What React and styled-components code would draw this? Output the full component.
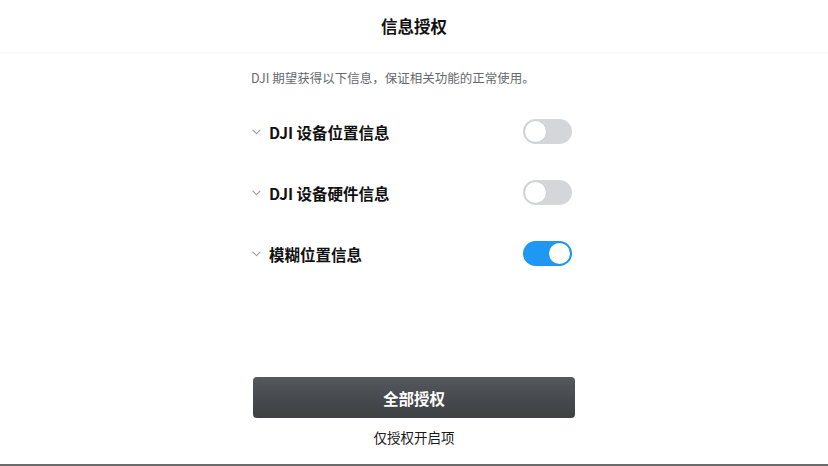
import styled, { createGlobalStyle } from 'styled-components';

const GlobalStyle = createGlobalStyle`
  html, body {
    margin: 0;
    padding: 0;
    background: #ffffff;
  }
  body {
    font-family: "Noto Sans CJK SC", "Liberation Sans", sans-serif;
    color: #1a1a1a;
  }
`;

const items = [
  { label: 'DJI 设备位置信息', on: false },
  { label: 'DJI 设备硬件信息', on: false },
  { label: '模糊位置信息', on: true },
];

const ChevronDown = () => (
  <svg width="9" height="6" viewBox="0 0 9 6" fill="none">
    <path d="M1 1.2 L4.5 4.6 L8 1.2" stroke="#9a9ca0" strokeWidth="1.1" strokeLinecap="round" strokeLinejoin="round" />
  </svg>
);

const App = () => {
  return (
    <>
      <GlobalStyle />
      <StPage>
        <StHeader>信息授权</StHeader>
        <StBody>
          <StIntro>DJI 期望获得以下信息，保证相关功能的正常使用。</StIntro>
          <StList>
            {items.map((item) => (
              <StRow key={item.label}>
                <StChevron>
                  <ChevronDown />
                </StChevron>
                <StLabel>{item.label}</StLabel>
                <StSwitch $on={item.on}>
                  <StKnob $on={item.on} />
                </StSwitch>
              </StRow>
            ))}
          </StList>
        </StBody>
        <StFooter>
          <StPrimaryBtn>全部授权</StPrimaryBtn>
          <StTextBtn>仅授权开启项</StTextBtn>
        </StFooter>
      </StPage>
    </>
  );
};

export default App;

// Styled-components
const StPage = styled.div`
  width: 828px;
  height: 466px;
  box-sizing: border-box;
  display: flex;
  flex-direction: column;
  border-bottom: 2px solid #6b6b6b;
`;

const StHeader = styled.div`
  height: 52px;
  flex-shrink: 0;
  display: flex;
  align-items: center;
  justify-content: center;
  font-size: 16.5px;
  font-weight: 700;
  color: #111;
  border-bottom: 1px solid #f7f7f7;
`;

const StBody = styled.div`
  width: 326px;
  margin: 0 auto;
  padding-top: 15px;
  flex: 1;
  display: flex;
  flex-direction: column;
`;

const StIntro = styled.p`
  margin: 0;
  font-size: 12.5px;
  line-height: 20px;
  color: #666a6e;
`;

const StList = styled.div`
  margin-top: 31px;
  display: flex;
  flex-direction: column;
  gap: 36px;
`;

const StRow = styled.div`
  height: 25px;
  display: flex;
  align-items: center;
`;

const StChevron = styled.span`
  width: 17px;
  display: flex;
  align-items: center;
  padding-left: 1px;
  margin-top: 1px;
`;

const StLabel = styled.span`
  flex: 1;
  font-size: 15.5px;
  font-weight: 700;
  color: #111;
`;

const StSwitch = styled.span`
  position: relative;
  width: 49px;
  height: 25px;
  border-radius: 13px;
  box-sizing: border-box;
  background: ${(p) => (p.$on ? '#1f98f4' : '#d4d6d9')};
  margin-right: 5px;
`;

const StKnob = styled.span`
  position: absolute;
  top: 2px;
  left: ${(p) => (p.$on ? '26px' : '2px')};
  width: 21px;
  height: 21px;
  border-radius: 50%;
  background: #ffffff;
  box-shadow: 0 0 0 0.5px rgba(0, 0, 0, 0.05);
`;

const StFooter = styled.div`
  display: flex;
  flex-direction: column;
  align-items: center;
  padding-bottom: 15px;
`;

const StPrimaryBtn = styled.button`
  width: 322px;
  height: 41px;
  border: none;
  border-radius: 4px;
  background: linear-gradient(180deg, #55585c 0%, #46494d 55%, #3e4144 100%);
  color: #ffffff;
  font-family: inherit;
  font-size: 15.5px;
  font-weight: 700;
  cursor: pointer;
`;

const StTextBtn = styled.button`
  margin-top: 7px;
  border: none;
  background: none;
  padding: 0;
  font-family: inherit;
  font-size: 13.5px;
  line-height: 24px;
  color: #1a1a1a;
  cursor: pointer;
`;
